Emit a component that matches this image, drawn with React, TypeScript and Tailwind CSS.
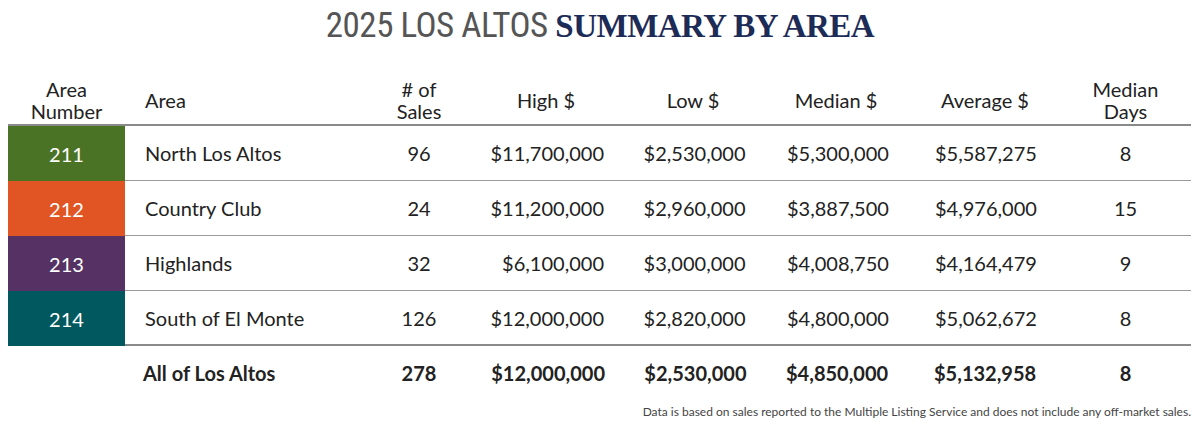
import React from 'react'

const rows = [
  { num: '211', color: 'bg-[#4b7326]', area: 'North Los Altos', sales: '96', high: '$11,700,000', low: '$2,530,000', median: '$5,300,000', avg: '$5,587,275', days: '8' },
  { num: '212', color: 'bg-[#e05523]', area: 'Country Club', sales: '24', high: '$11,200,000', low: '$2,960,000', median: '$3,887,500', avg: '$4,976,000', days: '15' },
  { num: '213', color: 'bg-[#553263]', area: 'Highlands', sales: '32', high: '$6,100,000', low: '$3,000,000', median: '$4,008,750', avg: '$4,164,479', days: '9' },
  { num: '214', color: 'bg-[#01585e]', area: 'South of El Monte', sales: '126', high: '$12,000,000', low: '$2,820,000', median: '$4,800,000', avg: '$5,062,672', days: '8' },
]

const cols = 'grid grid-cols-[245px_98px_156px_138px_148px_150px_131px] items-center'

// numbers sit right-aligned inside a block that is centred in the column
const Num = ({ children, w }: { children: React.ReactNode; w: string }) => (
  <div className="flex justify-center">
    <span className={`${w} text-right whitespace-nowrap`}>{children}</span>
  </div>
)

const App = () => {
  return (
    <div className="w-[1200px] h-[433px] bg-white text-[#222] font-['Lato',sans-serif]">
      <h1 className="pt-[4px] text-center text-[35px] leading-[38px] tracking-[-0.5px]">
        <span className="font-['Liberation_Sans_Narrow','Roboto_Condensed',sans-serif] text-[#555]">2025 LOS ALTOS </span>
        <span className="font-['Liberation_Serif',serif] font-bold text-[#1d2b57] text-[33px] tracking-[-0.5px]">SUMMARY BY AREA</span>
      </h1>

      <div className="mx-[8px] mt-[33px] w-[1183px] text-[20px]">
        {/* header */}
        <div className="flex items-end border-b-2 border-[#8a8a8a] pb-[2px] leading-[22px]">
          <div className="w-[117px] text-center">Area<br />Number</div>
          <div className={cols}>
            <div className="pl-[20px]">Area</div>
            <div className="text-center">#&nbsp;of<br />Sales</div>
            <div className="text-center">High $</div>
            <div className="text-center">Low $</div>
            <div className="text-center">Median $</div>
            <div className="text-center">Average $</div>
            <div className="text-center">Median<br />Days</div>
          </div>
        </div>

        {rows.map((r, i) => (
          <div key={r.num} className="flex h-[55px]">
            <div className={`${r.color} w-[117px] flex items-center justify-center text-white`}>{r.num}</div>
            <div className={`${cols} h-full ${i === rows.length - 1 ? 'border-b-2 border-[#8a8a8a]' : 'border-b border-[#9a9a9a]'}`}>
              <div className="pl-[20px]">{r.area}</div>
              <div className="text-center">{r.sales}</div>
              <Num w="w-[116px]">{r.high}</Num>
              <Num w="w-[105px]">{r.low}</Num>
              <Num w="w-[98px]">{r.median}</Num>
              <Num w="w-[100px]">{r.avg}</Num>
              <div className="text-center">{r.days}</div>
            </div>
          </div>
        ))}

        {/* totals */}
        <div className="flex h-[54px] font-bold">
          <div className="w-[117px]" />
          <div className={`${cols} h-full`}>
            <div className="pl-[18px]">All of Los Altos</div>
            <div className="text-center">278</div>
            <Num w="w-[118px]">$12,000,000</Num>
            <Num w="w-[107px]">$2,530,000</Num>
            <Num w="w-[100px]">$4,850,000</Num>
            <Num w="w-[102px]">$5,132,958</Num>
            <div className="text-center">8</div>
          </div>
        </div>

        <p className="mt-[3px] text-right text-[12px] text-[#444]">
          Data is based on sales reported to the Multiple Listing Service and does not include any off-market sales.
        </p>
      </div>
    </div>
  )
}

export default App
